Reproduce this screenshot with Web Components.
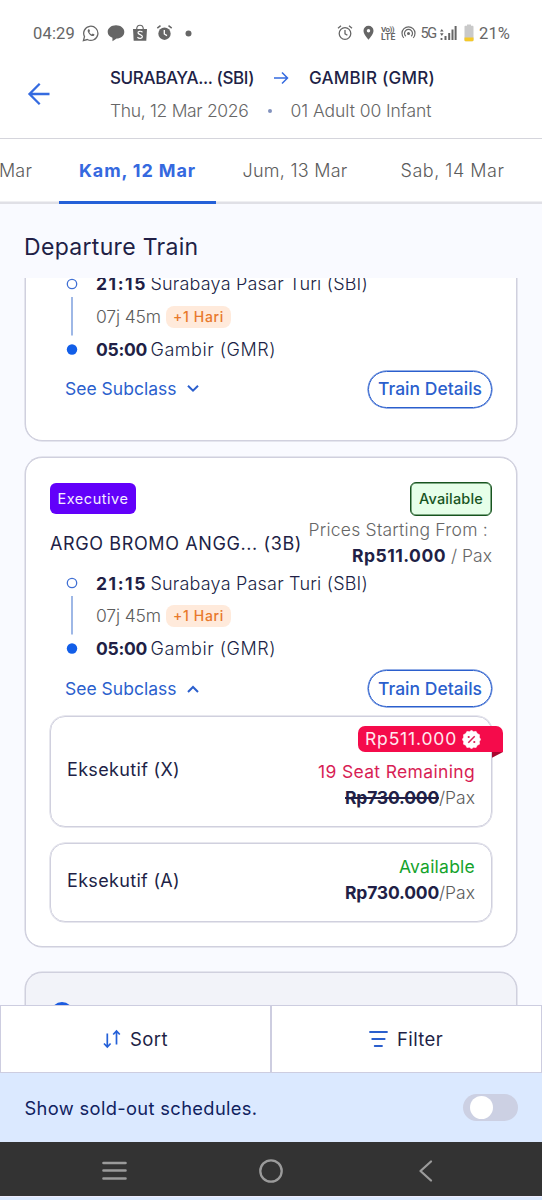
<!DOCTYPE html>
<html lang="en">
<head>
<meta charset="utf-8">
<title>Departure Train</title>
<style>
html,body{margin:0;padding:0;background:#f9faff}
body{width:542px;height:1200px;overflow:hidden;font-family:Inter,"Liberation Sans",sans-serif;color:#211f46}
</style>
</head>
<body>
<train-app></train-app>
<script>
const make = (name, html, after) => customElements.define(name, class extends HTMLElement {
  constructor() {
    super();
    const t = document.createElement('template');
    t.innerHTML = typeof html === 'function' ? html(this) : html;
    this.attachShadow({mode: 'open'}).append(t.content.cloneNode(true));
  }
  connectedCallback() { if (after) after(this); }
});

/* One line of text, tracked so that it fills the width given in "w". */
make('ui-text', `<style>
:host{display:block;flex:none;white-space:nowrap;line-height:26px;font-size:17.5px}
span{display:inline-block}
:host([strike]) span{text-decoration:line-through;text-decoration-thickness:1.500px}</style><span><slot></slot></span>`, el => {
  const a = n => el.getAttribute(n);
  if (a('size')) el.style.fontSize = a('size') + 'px';
  if (a('weight')) el.style.fontWeight = a('weight');
  if (a('color')) el.style.color = a('color');
  const w = +a('w');
  if (!w) return;
  el.style.width = w + 'px';
  const s = el.shadowRoot.querySelector('span');
  s.style.letterSpacing = '0px';
  const natural = s.getBoundingClientRect().width;
  if (natural) s.style.letterSpacing = ((w - natural) / el.textContent.length).toFixed(3) + 'px';
});

make('status-bar', `<style>
:host{display:flex;height:66px;align-items:center;box-sizing:border-box;color:#666;font-family:Roboto,sans-serif}
svg{flex:none;display:block}
.l{display:flex;align-items:center;padding-left:33px;flex:1}
.r{display:flex;align-items:center;padding-right:32px}
.v{display:flex;flex-direction:column}
</style>
<div class="l">
<ui-text size="16.5" w="42" style="margin-top:1px">04:29</ui-text>
<svg style="margin-left:7px" width="18" height="18" viewBox="0 0 18 18" fill="none" stroke="#666" stroke-width="1.3"><path d="M1.4 16.6l1.1-4A7.1 7.1 0 1 1 5.3 15.500z"/><path d="M6.300 5.200c-1.200 1-.7 2.800.9 4.700 1.900 2.100 3.800 2.800 4.900 1.700l.4-1-1.800-1-.9.9c-1.100-.3-2.200-1.500-2.500-2.500l.8-.9-.9-1.900z" fill="#666" stroke="none"/></svg>
<svg style="margin-left:7px" width="18" height="18" viewBox="0 0 18 18" fill="#666"><path d="M9 1.300c4.700 0 8.300 2.900 8.300 6.700S13.700 14.600 9.600 14.600L5.500 17.300l-.1-3.500C2.600 12.700.7 10.700.7 8 .7 4.200 4.300 1.300 9 1.300z"/></svg>
<svg style="margin-left:7px" width="16" height="18" viewBox="0 0 16 18"><path d="M1 5h14l-.7 11.800H1.700z" fill="#666"/><path d="M4.700 5c.2-5 6.400-5 6.600 0" fill="none" stroke="#666" stroke-width="1.200"/><path d="M10.500 8.200C8.600 6.500 5.800 7.300 6 8.900c.2 2 4.500 1.400 4.400 3.700-.1 2-3.200 2.300-5 .6" fill="none" stroke="#fff" stroke-width="1.200"/></svg>
<svg style="margin-left:8px" width="17" height="18" viewBox="0 0 17 18"><circle cx="8.500" cy="9.700" r="6.200" fill="#666"/><path d="M1.300 4.200l3.200-2.600M15.700 4.200l-3.200-2.600" stroke="#666" stroke-width="1.500"/><path d="M8.300 6v4l2.700 1.600" fill="none" stroke="#fff" stroke-width="1.300"/></svg>
<svg style="margin-left:12px" width="7" height="7"><circle cx="3.500" cy="3.500" r="3" fill="#666"/></svg>
</div>
<div class="r">
<svg width="16" height="18" viewBox="0 0 16 18" fill="none" stroke="#666" stroke-width="1.300"><circle cx="8" cy="9.500" r="5.800"/><path d="M1 4.200l3-2.500M15 4.200l-3-2.500M8 6v3.800l2.400 1.500"/></svg>
<svg style="margin-left:9px" width="13" height="18" viewBox="0 0 13 18"><path d="M6.500 1.800a5 5 0 0 0-5 5c0 3.600 5 9 5 9s5-5.400 5-9a5 5 0 0 0-5-5z" fill="#666"/><circle cx="6.500" cy="6.800" r="1.700" fill="#fff"/></svg>
<div class="v" style="margin-left:6px"><ui-text style="line-height:7px" size="8" weight="700" w="13">Vo))</ui-text><ui-text style="line-height:8px" size="8.500" weight="700" w="14.500">LTE</ui-text></div>
<svg style="margin-left:5px" width="15" height="16" viewBox="0 0 15 16" fill="none" stroke="#666" stroke-width="1.200"><path d="M2.800 12.800a6.500 6.500 0 1 1 9.400 0M4.800 11.300a4 4 0 1 1 5.400 0"/><circle cx="7.500" cy="8.500" r="1.500" fill="#666" stroke="none"/></svg>
<ui-text style="margin:1px 0 0 5px" size="14.500" w="15">5G</ui-text>
<svg style="margin-left:4px" width="17" height="16" viewBox="0 0 17 16" fill="#666"><path d="M4.500 11h2v4h-2zM8.200 8h2v7h-2zM11.500 4.500h2V15h-2zM14.600 1h2v14h-2zM.6 13h1.800v2H.6zM1.800 4L3.600 6.600H0zM1.800 11L0 8.300h3.600z"/></svg>
<svg style="margin-left:7.500px" width="10" height="18" viewBox="0 0 10 18"><path d="M3 .5h4v1.300h1.500c.6 0 1 .5 1 1V16c0 .7-.5 1.200-1 1.200h-7c-.6 0-1-.5-1-1.200V2.800c0-.6.4-1 1-1H3z" fill="#c9c9c9"/><path d="M.5 13.500h9V16c0 .7-.5 1.200-1 1.200h-7c-.6 0-1-.5-1-1.200z" fill="#f5c928"/></svg>
<ui-text style="margin:2px 0 0 5px" size="16.5" w="31">21%</ui-text>
</div>`);

make('app-header', `<style>
:host{display:flex;height:72px;border-bottom:1px solid #d5d5dc}
.back{width:110px;box-sizing:border-box;padding:16px 0 0 27px}
.row{display:flex;align-items:center}
.a{height:26px;margin-top:-1.500px}.b{height:26px;margin-top:7px}
svg{display:block;flex:none}
i{width:4px;height:4px;border-radius:50%;background:#8292bd;margin:1px 19px 0 19px}
</style>
<div class="back"><svg width="24" height="24" viewBox="0 0 24 24" fill="none" stroke="#356be0" stroke-width="2.300"><path d="M22.500 12H3M12.700 1.800L2.500 12l10.200 10.200"/></svg></div>
<div><div class="row a"><ui-text w="144" size="17" weight="450">SURABAYA... (SBI)</ui-text>
<svg style="margin:0 20px 0 19px" width="16" height="14" viewBox="0 0 16 14" fill="none" stroke="#356be0" stroke-width="1.500"><path d="M1 7h13M9 1.500L14.500 7 9 12.500"/></svg>
<ui-text w="126" size="17" weight="450">GAMBIR (GMR)</ui-text></div>
<div class="row b"><ui-text w="138.500" weight="350" color="#666" size="17.5">Thu, 12 Mar 2026</ui-text><i></i><ui-text w="141" weight="350" color="#666">01 Adult 00 Infant</ui-text></div></div>`);

make('date-tabs', `<style>
:host{display:flex;height:65px;box-sizing:border-box;box-shadow:inset 0 -2.500px #e0e0e6;background:#fff;color:#5c5c5c}
div{height:65px;box-sizing:border-box;padding-top:19px;flex:none}
.on{width:157px;border-bottom:3px solid #2460d8;padding-left:20px;color:#3569df}
</style>
<div style="width:59px"><ui-text w="33" weight="350" size="18" style="margin-left:-1px">Mar</ui-text></div>
<div class="on"><ui-text w="117" weight="700" size="18">Kam, 12 Mar</ui-text></div>
<div style="padding-left:26.500px"><ui-text w="105" weight="350" size="18">Jum, 13 Mar</ui-text></div>
<div style="padding-left:53px"><ui-text w="104" weight="350" size="18">Sab, 14 Mar</ui-text></div>`);

make('trip-leg', `<style>
:host{display:grid;grid-template-columns:46px 1fr;height:98px}
.rail{display:flex;flex-direction:column;align-items:center;width:12px;margin-left:16px;padding-top:10px}
svg{display:block}
.line{display:flex;align-items:center;height:33px}.mid{height:32px;margin-bottom:.500px}
.tag{background:#ffeadb;border-radius:8px;height:22px;margin-left:5px;padding:0 7px;display:flex;align-items:center}
</style>
<div class="rail"><svg width="12" height="80" viewBox="0 0 12 80"><circle cx="6" cy="6" r="4.700" fill="#fff" stroke="#4070d4" stroke-width="1.300"/><path d="M6 19v38.500" stroke="#86a6e0" stroke-width="1.600"/><circle cx="6" cy="71.500" r="5.200" fill="#125ee8"/></svg></div>
<div><div class="line"><ui-text w="51" weight="700" size="17.5">21:15</ui-text><ui-text style="margin-left:3.500px" w="217.500" size="18" weight="350">Surabaya Pasar Turi (SBI)</ui-text></div>
<div class="line mid"><ui-text w="65" weight="350" color="#5c5c5c">07j 45m</ui-text><div class="tag"><ui-text w="51" size="14" weight="500" color="#e8792b">+1 Hari</ui-text></div></div>
<div class="line"><ui-text w="51" weight="700" size="17.5">05:00</ui-text><ui-text style="margin-left:3.500px" w="125.500" size="18" weight="350">Gambir (GMR)</ui-text></div></div>`);

make('card-actions', el => `<style>
:host{display:flex;height:47px;align-items:center;justify-content:space-between;color:#2b5fcd;padding-left:15px}
.s{display:flex;align-items:center}
.b{box-sizing:border-box;width:124px;height:37px;border-radius:19px;border:1px solid #2b5fcd;box-shadow:0 0 0 .500px #2b5fcd;display:flex;align-items:center;justify-content:center}
</style>
<div class="s"><ui-text w="111.500">See Subclass</ui-text><svg style="margin-left:9px" width="14" height="10" viewBox="0 0 14 10" fill="none" stroke="#2b5fcd" stroke-width="2"><path d="${el.hasAttribute('open') ? 'M2 8l5-5 5 5' : 'M2 1.700l5 5 5-5'}"/></svg></div>
<div class="b"><ui-text w="104" weight="450">Train Details</ui-text></div>`);

make('train-card', `<style>
:host{display:block;box-sizing:border-box;margin:0 25px;padding:0 24px;width:492px;background:#fff;border:1px solid #d0d0de;box-shadow:0 0 0 .500px #d0d0de;border-radius:17px;flex:none}
</style><slot></slot>`);

make('card-head', `<style>
:host{display:flex;height:109px;justify-content:space-between}
.l{padding-top:25px}
.ex{width:86px;height:31px;border-radius:6px;background:#6200fa;display:flex;align-items:center;justify-content:center;margin-bottom:17px}
.ex ui-text{margin-top:1px}
.r{display:flex;flex-direction:column;align-items:flex-end;padding-top:24px}
.av{flex:none;box-sizing:border-box;width:82px;height:34px;border:1px solid #17541f;box-shadow:inset 0 0 0 .500px #17541f;border-radius:6px;background:#e6ffe9;display:flex;align-items:center;justify-content:center}
.p{display:flex}
</style>
<div class="l"><div class="ex"><ui-text w="71" size="14.5" color="#f4edff">Executive</ui-text></div><ui-text w="252" size="18" weight="400">ARGO BROMO ANGG... (3B)</ui-text></div>
<div class="r"><div class="av"><ui-text w="64" size="14.5" weight="450" color="#17541f">Available</ui-text></div>
<ui-text w="179.500" weight="350" color="#666" style="margin:1px 4px 0 0">Prices Starting From :</ui-text>
<div class="p"><ui-text w="94" weight="700">Rp511.000</ui-text><ui-text w="41" weight="350" color="#666" style="margin-left:5px">/ Pax</ui-text></div></div>`);

make('sub-class', el => { const promo = el.hasAttribute('promo'); return `<style>
:host{display:flex;align-items:center;justify-content:space-between;box-sizing:border-box;width:442px;border:1px solid #d0d0de;box-shadow:0 0 0 .500px #d0d0de;border-radius:15px;padding:0 16px 0 16px;position:relative}
.r{display:flex;flex-direction:column;align-items:flex-end;${promo ? 'padding-top:30px' : 'margin-top:-2px'}}
.n{margin-top:-1px}
.p{display:flex}
.rib{position:absolute;right:-12px;top:9px;width:145px;height:26px;border-radius:7px 7px 0 7px;background:#f50b4b;display:flex;align-items:center;box-sizing:border-box;padding-left:7px}
.fold{position:absolute;right:-12px;top:35px;width:11.500px;height:6px;background:#a8062f;clip-path:polygon(0 0,100% 0,0 100%)}
</style>
<ui-text class="n" w="113" size="18">${el.getAttribute('name')}</ui-text>
<div class="r"><ui-text w="${promo ? 157 : 76}" weight="${promo ? 400 : 400}" color="${promo ? '#d81e55' : '#14a32c'}">${el.getAttribute('state')}</ui-text>
<div class="p"><ui-text ${promo ? 'strike' : ''} w="94" weight="700" style="margin-top:.500px">Rp730.000</ui-text><ui-text w="36" weight="350" color="#5c5c5c" style="margin-top:.500px">/Pax</ui-text></div></div>
${promo ? `<div class="rib"><ui-text w="92" color="#ffe9ef">Rp511.000</ui-text><svg style="margin-left:5px" width="19" height="19" viewBox="0 0 19 19"><path d="M9.500 .3l2.100 1.400 2.500-.3 1.100 2.200 2.300 1.100-.2 2.500 1.400 2.300-1.400 2.100.2 2.600-2.300 1.100-1.100 2.200-2.500-.2-2.100 1.400-2.100-1.400-2.500.2-1.100-2.200-2.300-1.100.2-2.600L.3 9.500l1.400-2.300-.2-2.500 2.300-1.100 1.100-2.200 2.500.3z" fill="#fff" stroke="#fff" stroke-linejoin="round" stroke-width=".600"/><path d="M6.300 12.700l6.400-6.400" stroke="#d81e55" stroke-width="1.500"/><circle cx="6.700" cy="7" r="1.100" fill="#d81e55"/><circle cx="12.300" cy="12" r="1.100" fill="#d81e55"/></svg></div><div class="fold"></div>` : ''}`; });

make('train-list', `<style>
:host{display:flex;flex-direction:column;height:727px;overflow:hidden}
.c1{margin-top:-40px;padding-top:28.500px;height:203px}
.c2{margin-top:16px;height:490px;padding-bottom:24px}
.c3{margin-top:25px;height:80px;background:#f2f3f9}
.bub{width:22px;height:22px;border-radius:50%;background:#1b5be0;margin:28.500px 0 0 1px}
</style>
<train-card class="c1"><trip-leg></trip-leg><card-actions></card-actions></train-card>
<train-card class="c2"><card-head></card-head><trip-leg></trip-leg><card-actions open></card-actions>
<sub-class promo name="Eksekutif (X)" state="19 Seat Remaining" style="height:111px;margin-top:4px;padding-bottom:3px"></sub-class>
<sub-class name="Eksekutif (A)" state="Available" style="height:79px;margin-top:16px;padding-bottom:3px"></sub-class></train-card>
<train-card class="c3"><div class="bub"></div></train-card>`);

make('bottom-bar', `<style>
:host{display:grid;grid-template-columns:1fr 1fr;height:68px;background:#fff}
div{box-sizing:border-box;height:68px;border:1px solid #cdcde0;display:flex;align-items:center}
svg{flex:none}
</style>
<div style="padding-left:102px"><svg width="19" height="20" viewBox="0 0 19 20" fill="none" stroke="#2460d8" stroke-width="1.700"><path d="M4.300 4.500V18M1 14.500L4.300 18l3.300-3.500M13.500 15.500V2M10.200 5.500L13.500 2l3.300 3.500"/></svg><ui-text style="margin-left:8px" w="38" size="18.5">Sort</ui-text></div>
<div style="padding-left:97px"><svg width="19" height="18" viewBox="0 0 19 18" stroke="#2b5fcd" stroke-width="1.800" stroke-linecap="round"><path d="M1 2h17M3.200 9h12.500M5.700 16H13"/></svg><ui-text style="margin-left:9px" w="46" size="18.5">Filter</ui-text></div>`);

make('sold-out', `<style>
:host{display:flex;height:69px;background:#dbe9ff;align-items:center;justify-content:space-between;padding:0 24.500px;color:#10225f}
.t{width:55px;height:27px;border-radius:14px;background:#ccd0e3;display:flex;align-items:center;box-sizing:border-box;padding-left:7px}
.k{width:23px;height:23px;border-radius:50%;background:#fff}
ui-text{margin-top:1px}
</style><ui-text w="233" size="18.3">Show sold-out schedules.</ui-text><div class="t"><div class="k"></div></div>`);

make('nav-bar', `<style>
:host{display:grid;grid-template-columns:1fr 26px 1fr;height:54px;background:#333;border-bottom:1px solid #eef;padding:0 109px 0 102px;align-items:center}
svg{margin-top:4px;display:block}
</style><svg width="25" height="22" viewBox="0 0 25 22" stroke="#9b9b9b" stroke-width="2.600" stroke-linecap="round"><path d="M1.500 3h22M1.500 10.500h22M1.500 18.500h22"/></svg>
<svg width="26" height="26" viewBox="0 0 26 26" style="margin-left:3.500px"><circle cx="13" cy="13" r="10.700" fill="none" stroke="#9b9b9b" stroke-width="2.300"/></svg>
<svg style="justify-self:end" width="15" height="24" viewBox="0 0 15 24" fill="none" stroke="#9b9b9b" stroke-width="2.300" stroke-linecap="round" stroke-linejoin="round"><path d="M13 2.500L2.500 12 13 21.500"/></svg>`);

make('train-app', `<style>
:host{display:flex;flex-direction:column;width:542px;height:1200px;background:#f9faff}
.top{background:#fff}
.title{height:74px;padding:30px 0 0 24px;box-sizing:border-box}
.end{height:3px;background:#dbe9ff}
</style>
<div class="top"><status-bar></status-bar><app-header></app-header></div>
<date-tabs></date-tabs>
<div class="title"><ui-text w="174.500" size="23">Departure Train</ui-text></div>
<train-list></train-list>
<bottom-bar></bottom-bar><sold-out></sold-out><nav-bar></nav-bar><div class="end"></div>`);
</script>
</body>
</html>
